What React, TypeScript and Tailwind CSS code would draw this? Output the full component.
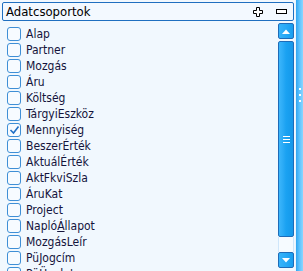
import React from "react";

const items: { label: React.ReactNode; checked?: boolean }[] = [
  { label: "Alap" },
  { label: "Partner" },
  { label: "Mozgás" },
  { label: "Áru" },
  { label: "Költség" },
  { label: "TárgyiEszköz" },
  { label: "Mennyiség", checked: true },
  { label: "BeszerÉrték" },
  { label: "AktuálÉrték" },
  { label: "AktFkviSzla" },
  { label: "ÁruKat" },
  { label: "Project" },
  {
    label: (
      <>
        Napló<span className="underline">Á</span>llapot
      </>
    ),
  },
  { label: "MozgásLeír" },
  { label: "PüJogcím" },
  { label: "PüÜgylet" },
];

const CheckBox = ({ checked }: { checked?: boolean }) => (
  <div className="w-[14px] h-[14px] rounded-[3px] border border-[#3f8fd6] bg-[#f7fbff] flex items-center justify-center shrink-0">
    {checked ? (
      <svg width="11" height="10" viewBox="0 0 11 10">
        <path d="M1.5 5 L4.5 8 L9.5 1.5" fill="none" stroke="#1f6fc6" strokeWidth="1.6" />
      </svg>
    ) : null}
  </div>
);

const PlusIcon = () => (
  <svg width="10" height="10" viewBox="0 0 10 10">
    <path d="M3.5 0.5 H6.5 V3.5 H9.5 V6.5 H6.5 V9.5 H3.5 V6.5 H0.5 V3.5 H3.5 Z" fill="#fff" stroke="#000" strokeWidth="1" />
  </svg>
);

const MinusIcon = () => (
  <svg width="11" height="5" viewBox="0 0 11 5">
    <rect x="0.5" y="0.5" width="10" height="4" fill="#fff" stroke="#000" strokeWidth="1" />
  </svg>
);

const ScrollButton = ({ up }: { up?: boolean }) => (
  <div className="h-[16px] rounded-[2px] border border-[#1e6cb8] bg-gradient-to-r from-[#37b4fb] to-[#169ef0] flex items-center justify-center">
    <svg width="8" height="5" viewBox="0 0 8 5">
      <path d={up ? "M0 5 L4 0.5 L8 5 Z" : "M0 0 L4 4.5 L8 0 Z"} fill="#fff" />
    </svg>
  </div>
);

export default function App() {
  return (
    <div
      className="w-[303px] h-[271px] bg-[#f1f8fe] flex overflow-hidden"
      style={{ fontFamily: "'DejaVu Sans Condensed', 'DejaVu Sans', sans-serif" }}
    >
      <div className="flex-1 flex flex-col pl-[2px] pt-[2px] min-w-0">
        <div className="h-[19px] w-[292px] border border-[#1f6fc0] rounded-[2px] flex items-center pl-[3px] pr-[6px] bg-[#f3f9ff]">
          <span className="text-[13px] text-black flex-1 leading-none">Adatcsoportok</span>
          <div className="flex items-center gap-[13px]">
            <PlusIcon />
            <MinusIcon />
          </div>
        </div>
        <div className="flex flex-1 min-h-0 pt-[2px]">
          <div className="flex-1 flex flex-col pl-[5px] pt-[3px] overflow-hidden">
            {items.map((item, i) => (
              <div key={i} className="h-[16px] flex items-center gap-[5px] shrink-0">
                <CheckBox checked={item.checked} />
                <span className="text-[12px] text-[#14143c] leading-none whitespace-nowrap">{item.label}</span>
              </div>
            ))}
          </div>
          <div className="w-[16px] flex flex-col pb-[3px] mr-[1px]">
            <ScrollButton up />
            <div className="flex-1 flex flex-col pt-[2px]">
              <div className="h-[196px] rounded-[2px] border border-[#1e6cb8] bg-gradient-to-r from-[#3cb6fb] via-[#1aa2f2] to-[#1598ea] flex items-center justify-center">
                <div className="flex flex-col gap-[2px]">
                  <div className="w-[7px] h-[1px] bg-white" />
                  <div className="w-[7px] h-[1px] bg-white" />
                  <div className="w-[7px] h-[1px] bg-white" />
                </div>
              </div>
              <div className="flex-1 border-x border-[#cfe6fa] bg-[#f6fbff]" />
            </div>
            <ScrollButton />
          </div>
        </div>
      </div>
      <div className="w-[8px] h-full bg-gradient-to-r from-[#2fa6f0] via-[#5cc3ff] to-[#8ad6ff] flex flex-col items-center pt-[88px] gap-[4px] border-l border-[#e8f4ff]">
        <div className="w-[2px] h-[2px] bg-white" />
        <div className="w-[2px] h-[2px] bg-white" />
        <div className="w-[2px] h-[2px] bg-white" />
      </div>
    </div>
  );
}
